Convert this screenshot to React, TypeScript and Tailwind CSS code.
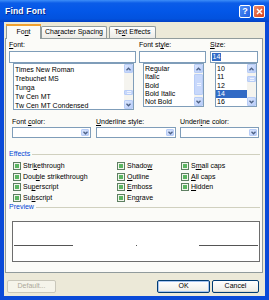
import React from "react";

function ScrollBtn({ down }: { down?: boolean }) {
  return (
    <div className="w-[9px] h-[9px] shrink-0 rounded-[1px] border border-[#b8cdf7] bg-[linear-gradient(135deg,#dbe6fd,#b9cdf9)] flex items-center justify-center">
      <svg width="5" height="4" viewBox="0 0 5 4">
        <path
          d={down ? "M0.5 0.8 L2.5 2.8 L4.5 0.8" : "M0.5 3.2 L2.5 1.2 L4.5 3.2"}
          stroke="#4d6185"
          strokeWidth="1.3"
          fill="none"
        />
      </svg>
    </div>
  );
}

function ScrollBar({ thumbTop, thumbH }: { thumbTop: number; thumbH: number }) {
  return (
    <div className="w-[9px] h-full flex flex-col bg-[#f5f4ef]">
      <ScrollBtn />
      <div className="flex-1 relative">
        <div
          className="absolute left-0 w-[9px] rounded-[1px] border border-[#b8cdf7] bg-[#c8d8fb] flex flex-col items-center justify-center gap-[1px]"
          style={{ top: thumbTop, height: thumbH }}
        >
          <div className="w-[4px] h-px bg-[#eef3fe]" />
          <div className="w-[4px] h-px bg-[#eef3fe]" />
        </div>
      </div>
      <ScrollBtn down />
    </div>
  );
}

function Dropdown() {
  return (
    <div className="h-[11px] border border-[#7f9db9] bg-white flex justify-end items-center pr-[1px]">
      <div className="w-[8px] h-[7px] rounded-[1px] border border-[#b8cdf7] bg-[linear-gradient(135deg,#dbe6fd,#b9cdf9)] flex items-center justify-center">
        <svg width="5" height="4" viewBox="0 0 5 4">
          <path d="M0.5 0.8 L2.5 2.8 L4.5 0.8" stroke="#4d6185" strokeWidth="1.3" fill="none" />
        </svg>
      </div>
    </div>
  );
}

function Check({ children }: { children: React.ReactNode }) {
  return (
    <div className="h-[10.5px] flex items-center gap-[2px]">
      <div className="w-[8px] h-[8px] border border-[#5e7f62] bg-[#f1f5ec] flex items-center justify-center">
        <div className="w-[4px] h-[4px] bg-[#5bb561]" />
      </div>
      <span className="leading-[10px]">{children}</span>
    </div>
  );
}

export default function App() {
  const fontItems = ["Times New Roman", "Trebuchet MS", "Tunga", "Tw Cen MT", "Tw Cen MT Condensed"];
  const styleItems = ["Regular", "Italic", "Bold", "Bold Italic", "Not Bold"];
  const sizeItems = ["10", "11", "12", "14", "16"];
  return (
    <div className="w-[269px] h-[300px] flex flex-col bg-[#0a4ad8] font-['Liberation_Sans',Arial,sans-serif] text-[7px] text-black select-none">
      {/* Title bar */}
      <div className="h-[22px] shrink-0 flex items-center pl-[5px] pr-[4px] bg-[linear-gradient(to_bottom,#3d8ef8_0%,#0b5ce8_14%,#0357e8_50%,#0252de_85%,#0440c4_100%)]">
        <span className="text-white font-bold text-[8.5px] tracking-[0.2px] [text-shadow:1px_1px_0_#0a2a8a]">Find Font</span>
        <div className="ml-auto w-[12px] h-[13px] rounded-[2px] border border-white bg-[linear-gradient(135deg,#4f8ef7,#1f5fe0)] flex items-center justify-center text-white font-bold text-[9px] leading-none">
          ?
        </div>
        <div className="ml-[2px] w-[12px] h-[13px] rounded-[2px] border border-white bg-[linear-gradient(135deg,#eb8a6a,#d9431c)] flex items-center justify-center">
          <svg width="7" height="7" viewBox="0 0 7 7">
            <path d="M1 1 L6 6 M6 1 L1 6" stroke="white" strokeWidth="1.5" />
          </svg>
        </div>
      </div>

      {/* Body */}
      <div className="flex-1 mx-[4px] mb-[4px] bg-[#ece9d8] flex flex-col">
        {/* Tabs */}
        <div className="h-[16px] pt-[2px] flex items-end pl-[2px] shrink-0">
          <div className="relative z-10 h-[15px] -mb-px w-[35px] border-x border-[#919b9c] bg-[#fbfbf8] flex flex-col">
            <div className="h-[2px] bg-[#f0a030] -mx-px" />
            <div className="flex-1 flex items-center justify-center">
              Fo<u>n</u>t
            </div>
          </div>
          <div className="h-[12px] w-[66px] border-x border-t border-[#919b9c] rounded-t-[2px] bg-[linear-gradient(to_bottom,#ffffff,#ecebe6)] flex items-center justify-center">
            Cha<u>r</u>acter Spacing
          </div>
          <div className="ml-[2px] h-[12px] w-[47px] border-x border-t border-[#919b9c] rounded-t-[2px] bg-[linear-gradient(to_bottom,#ffffff,#ecebe6)] flex items-center justify-center">
            Te<u>x</u>t Effects
          </div>
        </div>

        {/* Panel */}
        <div className="ml-[1px] w-[258px] h-[235px] shrink-0 border border-[#919b9c] bg-[#fbfbf8] flex flex-col pl-[3px]">
          {/* Row 1 */}
          <div className="flex">
            <div className="w-[127px] flex flex-col">
              <div className="h-[12px] leading-[12px]">
                <u>F</u>ont:
              </div>
              <div className="h-[12px] border border-[#7f9db9] bg-white" />
              <div className="ml-[4px] w-[121px] h-[47px] border border-[#7f9db9] bg-white flex">
                <div className="flex-1 pl-[1px] pt-[1px]">
                  {fontItems.map((f) => (
                    <div key={f} className="h-[9px] leading-[9px] whitespace-nowrap">
                      {f}
                    </div>
                  ))}
                </div>
                <ScrollBar thumbTop={17} thumbH={5} />
              </div>
            </div>
            <div className="ml-[3px] w-[67px] flex flex-col">
              <div className="h-[12px] leading-[12px]">
                Font st<u>y</u>le:
              </div>
              <div className="h-[12px] border border-[#7f9db9] bg-white" />
              <div className="ml-[4px] w-[61px] h-[44px] border border-[#7f9db9] bg-white flex">
                <div className="flex-1 pl-[1px] pt-[1px]">
                  {styleItems.map((f) => (
                    <div key={f} className="h-[8.3px] leading-[8.3px] whitespace-nowrap">
                      {f}
                    </div>
                  ))}
                </div>
                <ScrollBar thumbTop={1} thumbH={21} />
              </div>
            </div>
            <div className="ml-[4px] w-[48px] flex flex-col">
              <div className="h-[12px] leading-[12px]">
                <u>S</u>ize:
              </div>
              <div className="h-[12px] border border-[#7f9db9] bg-white flex items-center pl-[1px]">
                <span className="bg-[#316ac5] text-white leading-[8px] px-[0.5px]">14</span>
              </div>
              <div className="ml-[5px] w-[42px] h-[44px] border border-[#7f9db9] bg-white flex">
                <div className="flex-1 pt-[1px]">
                  {sizeItems.map((f) => (
                    <div
                      key={f}
                      className={
                        "h-[8.3px] leading-[8.3px] pl-[1px] " +
                        (f === "14" ? "bg-[#316ac5] text-white" : "")
                      }
                    >
                      {f}
                    </div>
                  ))}
                </div>
                <ScrollBar thumbTop={3} thumbH={6} />
              </div>
            </div>
          </div>

          {/* Row 2 */}
          <div className="mt-[6px] pl-[3px] flex">
            <div className="w-[79px] flex flex-col">
              <div className="h-[11px] leading-[11px]">
                Font <u>c</u>olor:
              </div>
              <Dropdown />
            </div>
            <div className="ml-[5px] w-[80px] flex flex-col">
              <div className="h-[11px] leading-[11px]">
                <u>U</u>nderline style:
              </div>
              <Dropdown />
            </div>
            <div className="ml-[4px] w-[79px] flex flex-col">
              <div className="h-[11px] leading-[11px]">
                Underl<u>i</u>ne color:
              </div>
              <Dropdown />
            </div>
          </div>

          {/* Effects */}
          <div className="mt-[11px] h-[10px] flex items-center pr-[2px]">
            <span className="text-[#0046d5]">Effects</span>
            <div className="ml-[2px] flex-1 h-px bg-[#d0d0bf]" />
          </div>
          <div className="mt-[2px] pl-[4px] grid grid-cols-[104px_64px_1fr]">
            <Check>
              Stri<u>k</u>ethrough
            </Check>
            <Check>
              Shado<u>w</u>
            </Check>
            <Check>
              S<u>m</u>all caps
            </Check>
            <Check>
              Dou<u>b</u>le strikethrough
            </Check>
            <Check>
              <u>O</u>utline
            </Check>
            <Check>
              <u>A</u>ll caps
            </Check>
            <Check>
              Su<u>p</u>erscript
            </Check>
            <Check>
              <u>E</u>mboss
            </Check>
            <Check>
              <u>H</u>idden
            </Check>
            <Check>
              Su<u>b</u>script
            </Check>
            <Check>
              En<u>g</u>rave
            </Check>
            <div />
          </div>

          {/* Preview */}
          <div className="h-[9px] flex items-center pr-[2px]">
            <span className="text-[#0046d5]">Preview</span>
            <div className="ml-[2px] flex-1 h-px bg-[#d0d0bf]" />
          </div>
          <div className="mt-[9px] ml-[3px] w-[248px] h-[41px] border border-[#6d6d6d] bg-white flex flex-col">
            <div className="mt-[23px] h-px flex items-center px-px">
              <div className="w-[59px] h-px bg-[#555]" />
              <div className="flex-1 flex justify-center">
                <div className="w-px h-px bg-[#555]" />
              </div>
              <div className="w-[59px] h-px bg-[#555]" />
            </div>
          </div>
        </div>

        {/* Buttons */}
        <div className="mt-[7px] h-[13px] flex pl-[3px] pr-[6px]">
          <div className="w-[49px] h-[13px] rounded-[2px] border border-[#c9c7ba] bg-[#f5f4ea] text-[#aca899] flex items-center justify-center">
            Default...
          </div>
          <div className="ml-auto w-[53px] h-[13px] rounded-[2px] border border-[#003c74] bg-[linear-gradient(to_bottom,#ffffff,#f0f0ea_85%,#d6d0c5)] shadow-[inset_0_0_0_1px_#a6c4f0] flex items-center justify-center">
            OK
          </div>
          <div className="ml-[2px] w-[47px] h-[13px] rounded-[2px] border border-[#003c74] bg-[linear-gradient(to_bottom,#ffffff,#f0f0ea_85%,#d6d0c5)] flex items-center justify-center">
            Cancel
          </div>
        </div>
      </div>
    </div>
  );
}
